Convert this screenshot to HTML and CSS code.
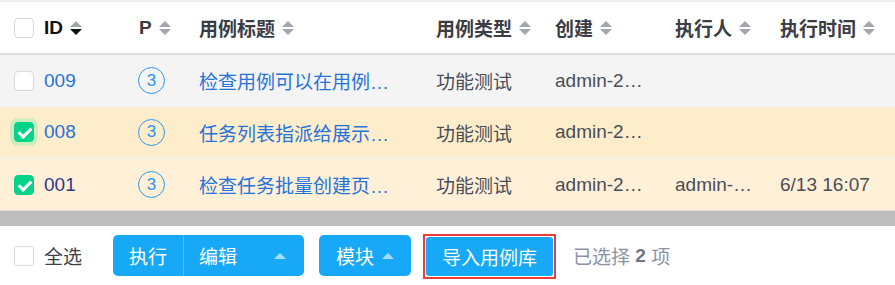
FILE: index.html
```html
<!DOCTYPE html>
<html lang="zh">
<head>
<meta charset="utf-8">
<link rel="stylesheet" href="styles.css">
</head>
<body>
<div class="table">
  <div class="row head">
    <div class="cell"><span class="cb"></span></div>
    <div class="cell id-h">ID<span class="sort active"></span></div>
    <div class="cell">P<span class="sort"></span></div>
    <div class="cell">用例标题<span class="sort"></span></div>
    <div class="cell">用例类型<span class="sort"></span></div>
    <div class="cell">创建<span class="sort"></span></div>
    <div class="cell">执行人<span class="sort"></span></div>
    <div class="cell">执行时间<span class="sort"></span></div>
  </div>
  <div class="row r1">
    <div class="cell"><span class="cb"></span></div>
    <div class="cell link">009</div>
    <div class="cell"><span class="badge">3</span></div>
    <div class="cell link">检查用例可以在用例…</div>
    <div class="cell txt">功能测试</div>
    <div class="cell txt">admin-2…</div>
    <div class="cell txt"></div>
    <div class="cell txt"></div>
  </div>
  <div class="row r2">
    <div class="cell"><span class="cb on focus"></span></div>
    <div class="cell link">008</div>
    <div class="cell"><span class="badge">3</span></div>
    <div class="cell link">任务列表指派给展示…</div>
    <div class="cell txt">功能测试</div>
    <div class="cell txt">admin-2…</div>
    <div class="cell txt"></div>
    <div class="cell txt"></div>
  </div>
  <div class="row r3">
    <div class="cell"><span class="cb on"></span></div>
    <div class="cell link visited">001</div>
    <div class="cell"><span class="badge">3</span></div>
    <div class="cell link">检查任务批量创建页…</div>
    <div class="cell txt">功能测试</div>
    <div class="cell txt">admin-2…</div>
    <div class="cell txt">admin-…</div>
    <div class="cell txt">6/13 16:07</div>
  </div>
  <div class="scrollbar"></div>
</div>
<div class="footer">
  <label class="all"><span class="cb"></span>全选</label>
  <div class="btn-group">
    <span class="seg seg-run">执行</span>
    <span class="seg seg-edit">编辑<span class="caret"></span></span>
  </div>
  <span class="btn btn-module">模块<span class="caret"></span></span>
  <span class="outline"><span class="btn btn-import">导入用例库</span></span>
  <span class="selected">已选择 <b>2</b> 项</span>
</div>
</body>
</html>
```
FILE: styles.css
```css
* { box-sizing: border-box; }
html, body { margin: 0; padding: 0; background: #fff; }
body {
  width: 895px;
  height: 285px;
  overflow: hidden;
  font-family: "Liberation Sans", Arial, "Noto Sans CJK SC", sans-serif;
  font-size: 19px;
  color: #45484f;
}
.table { border-top: 2px solid #ececec; }
.row {
  display: grid;
  grid-template-columns: 30px 95px 60px 237px 119px 120px 105px 1fr;
  padding-left: 14px;
  align-items: center;
  height: 52px;
  border-bottom: 1px solid #efefef;
}
.row.head {
  height: 53px;
  border-bottom: 2px solid #dedede;
  font-weight: bold;
  color: #3a3d44;
}
.head .id-h { color: #111; }
.r1 { background: #f4f4f4; }
.r2 { background: #feedcb; border-bottom: 2px solid #f6f1ea; }
.r3 { background: #fff0d7; border-bottom: 1px solid #e2ddd5; }
.cell {
  display: flex;
  align-items: center;
  white-space: nowrap;
  overflow: visible;
}
.link { color: #2673db; }
.link.visited { color: #2b3b8e; }
.txt { color: #4a4e57; }
.cb {
  display: inline-block;
  width: 20px;
  height: 20px;
  border: 1px solid #d8d8d8;
  border-radius: 4px;
  background: #fff;
  position: relative;
  flex: none;
}
.cb.on {
  background: #05d38b;
  border-color: #05d38b;
}
.cb.on::after {
  content: "";
  position: absolute;
  left: 6px;
  top: 2px;
  width: 5px;
  height: 10px;
  border: solid #fff;
  border-width: 0 3px 3px 0;
  transform: rotate(45deg);
}
.cb.focus { box-shadow: 0 0 0 4px #cdecbf; }
.sort {
  display: inline-flex;
  flex-direction: column;
  gap: 2px;
  margin-left: 7px;
}
.sort::before, .sort::after {
  content: "";
  display: block;
  width: 0;
  height: 0;
  border-left: 6px solid transparent;
  border-right: 6px solid transparent;
}
.sort::before { border-bottom: 6px solid #a3a6ad; }
.sort::after { border-top: 6px solid #a3a6ad; }
.sort.active::after { border-top-color: #111; }
.badge {
  display: inline-flex;
  align-items: center;
  justify-content: center;
  width: 27px;
  height: 27px;
  border: 1.5px solid #2a96ee;
  border-radius: 50%;
  color: #2a96ee;
  font-size: 17px;
  margin-left: -1px;
}
.scrollbar {
  height: 15px;
  background: #bdbdbd;
}
.footer {
  display: flex;
  padding: 9px 0 0 14px;
  height: 58px;
  align-items: flex-start;
}
.all {
  display: flex;
  align-items: center;
  gap: 10px;
  height: 41px;
  color: #3c4049;
  margin-right: 31px;
}
.btn-group {
  display: flex;
  height: 41px;
  background: #17a9f7;
  border-radius: 5px;
  color: #fff;
  margin-right: 15px;
}
.seg {
  display: flex;
  align-items: center;
}
.seg-run {
  padding: 0 16px 0 16px;
  border-right: 1px solid #52bff8;
}
.seg-edit {
  padding: 0 18px 0 15px;
}
.seg-edit .caret { margin-left: 37px; }
.caret {
  display: inline-block;
  width: 0;
  height: 0;
  border-left: 6px solid transparent;
  border-right: 6px solid transparent;
  border-bottom: 6px solid #a8dcfa;
}
.btn {
  display: flex;
  align-items: center;
  height: 41px;
  background: #17a9f7;
  border-radius: 5px;
  color: #fff;
}
.btn-module {
  padding: 0 17px 0 17px;
  margin-right: 12px;
}
.btn-module .caret { margin-left: 8px; }
.outline {
  display: flex;
  border: 2px solid #ef3b3b;
  margin-top: -1px;
  padding: 1px;
  height: 45px;
  margin-right: 17px;
}
.btn-import {
  padding: 0 16px;
  height: 39px;
  border-radius: 3px;
}
.selected {
  display: flex;
  align-items: center;
  height: 41px;
  color: #8b93a5;
  white-space: pre;
}
.selected b { color: #6d7587; }
```
